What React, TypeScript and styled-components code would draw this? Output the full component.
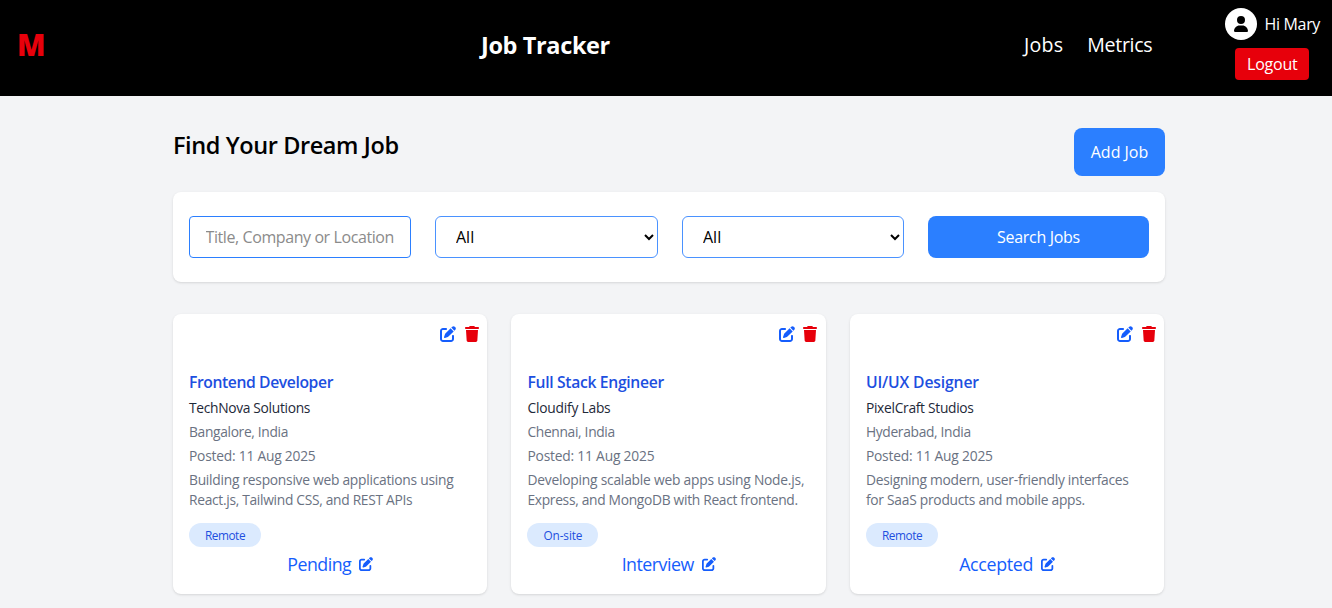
import React from 'react';
import styled, { createGlobalStyle } from 'styled-components';
import { FaPenToSquare, FaTrash, FaUser } from 'react-icons/fa6';

const GlobalStyle = createGlobalStyle`
  *, *::before, *::after { box-sizing: border-box; margin: 0; padding: 0; }
  body {
    background: #f3f4f6;
    color: #000;
    font: 400 16px/24px "Open Sans", "Noto Sans", sans-serif;
    overflow: hidden;
  }
  svg { display: block; }
  button, input, select { font: inherit; }
`;

const Label = styled.span<{ $ls?: number }>`
  letter-spacing: ${(p) => p.$ls ?? 0}px;
  white-space: nowrap;
`;

const Page = styled.div`
  height: 608px;
  overflow: hidden;
`;

const Header = styled.header`
  height: 96px;
  padding: 0 12px 7px 18px;
  background: #000;
  color: #fff;
  display: flex;
  align-items: center;
`;

const Logo = styled.div`
  width: 463px;
  margin-left: -1px;
  color: #e7000b;
  font: 800 29.5px/36px "Open Sans", sans-serif;
`;

const Brand = styled.h1`
  width: 544px;
  padding-left: 1px;
  font-size: 23.5px;
  line-height: 32px;
  font-weight: 700;
`;

const Nav = styled.nav`
  display: flex;
  gap: 24px;
  flex: 1;
  font-size: 19.6px;
  line-height: 28px;
`;

const Account = styled.div`
  display: flex;
  flex-direction: column;
  align-items: center;
  align-self: flex-start;
  gap: 8px;
  padding-top: 8px;
`;

const Greeting = styled.div`
  display: flex;
  align-items: center;
  gap: 8px;
`;

const Avatar = styled.div`
  width: 32px;
  height: 32px;
  border-radius: 50%;
  background: #fff;
  color: #000;
  display: grid;
  place-items: center;
`;

const Logout = styled.button`
  width: 74px;
  height: 32px;
  border: 0;
  border-radius: 4px;
  background: #e7000b;
  color: #fff;
`;

const Main = styled.main`
  width: 992px;
  margin-left: 173px;
  padding-top: 32px;
`;

const TitleRow = styled.div`
  display: flex;
  justify-content: space-between;
  align-items: flex-start;
  height: 64px;
`;

const Heading = styled.h2`
  font-size: 23.5px;
  line-height: 35px;
  font-weight: 600;
`;

const PrimaryButton = styled.button<{ $w?: number; $h: number }>`
  width: ${(p) => (p.$w ? `${p.$w}px` : '100%')};
  height: ${(p) => p.$h}px;
  border: 0;
  border-radius: 8px;
  background: #2b7fff;
  color: #fff;
`;

const SearchPanel = styled.form`
  height: 90px;
  padding: 24px 16px;
  border-radius: 8px;
  background: #fff;
  box-shadow: 0 1px 3px rgba(0, 0, 0, 0.1), 0 1px 2px -1px rgba(0, 0, 0, 0.1);
  display: grid;
  grid-template-columns: 222px 223px 222px 221px;
  justify-content: space-between;
`;

const SearchInput = styled.input`
  width: 100%;
  height: 42px;
  padding: 0 8px 0 15.5px;
  border: 1px solid #2b7fff;
  border-radius: 4px;
  background: #fff;
  letter-spacing: -0.41px;
  &::placeholder { color: #8b8b8b; opacity: 1; }
`;

const Select = styled.select`
  width: 100%;
  height: 42px;
  padding: 0 16px;
  border: 1px solid #4a92ff;
  border-radius: 6px;
  background: #fff;
  color: #000;
`;

const Cards = styled.section`
  width: 991.4px;
  margin-top: 32px;
  display: grid;
  grid-template-columns: repeat(3, minmax(0, 1fr));
  gap: 24px;
`;

const Card = styled.article`
  height: 280px;
  padding: 12px 16px 0;
  border-radius: 8px;
  background: #fff;
  box-shadow: 0 1px 3px rgba(0, 0, 0, 0.1), 0 1px 2px -1px rgba(0, 0, 0, 0.1);
`;

const Actions = styled.div`
  display: flex;
  justify-content: flex-end;
  gap: 7.4px;
  height: 44px;
  margin-right: -8.4px;
  color: #155dfc;
`;

const DeleteIcon = styled(FaTrash)`
  color: #e7000b;
`;

const JobTitle = styled.h3`
  color: #1d4fe0;
  font-size: 15.7px;
  line-height: 24px;
  font-weight: 600;
`;

const Detail = styled.p<{ $dark?: boolean }>`
  margin-top: 4px;
  color: ${(p) => (p.$dark ? '#1e2939' : '#6a7282')};
  font-size: 13.8px;
  line-height: 20px;
`;

const Tag = styled.div`
  display: flex;
  align-items: center;
  width: fit-content;
  height: 24px;
  margin-top: 13px;
  padding: 0 16px;
  border-radius: 12px;
  background: #dbeafe;
  color: #1d4fe0;
  font-size: 11.8px;
`;

const Status = styled.div`
  display: flex;
  justify-content: center;
  align-items: center;
  gap: 8px;
  margin-top: 3px;
  color: #155dfc;
  font-size: 17.8px;
  line-height: 28px;
`;

type Line = [text: string, spacing: number];

interface Job {
  title: Line;
  company: Line;
  place: Line;
  posted: Line;
  about: Line[];
  mode: Line;
  status: Line;
}

const jobs: Job[] = [
  {
    title: ['Frontend Developer', -0.4],
    company: ['TechNova Solutions', -0.32],
    place: ['Bangalore, India', -0.34],
    posted: ['Posted: 11 Aug 2025', -0.22],
    about: [['Building responsive web applications using', -0.26], ['React.js, Tailwind CSS, and REST APIs', -0.31]],
    mode: ['Remote', -0.45],
    status: ['Pending', -0.5],
  },
  {
    title: ['Full Stack Engineer', -0.32],
    company: ['Cloudify Labs', -0.22],
    place: ['Chennai, India', -0.33],
    posted: ['Posted: 11 Aug 2025', -0.2],
    about: [['Developing scalable web apps using Node.js,', -0.22], ['Express, and MongoDB with React frontend.', -0.31]],
    mode: ['On-site', -0.1],
    status: ['Interview', -0.5],
  },
  {
    title: ['UI/UX Designer', -0.15],
    company: ['PixelCraft Studios', -0.3],
    place: ['Hyderabad, India', -0.33],
    posted: ['Posted: 11 Aug 2025', -0.2],
    about: [['Designing modern, user-friendly interfaces', -0.27], ['for SaaS products and mobile apps.', -0.26]],
    mode: ['Remote', -0.4],
    status: ['Accepted', -0.3],
  },
];

const Spaced = ({ line }: { line: Line }) => <Label $ls={line[1]}>{line[0]}</Label>;

const JobCard = ({ job }: { job: Job }) => (
  <Card>
    <Actions>
      <FaPenToSquare size={16} />
      <DeleteIcon size={16} />
    </Actions>
    <JobTitle><Spaced line={job.title} /></JobTitle>
    <Detail $dark><Spaced line={job.company} /></Detail>
    <Detail><Spaced line={job.place} /></Detail>
    <Detail><Spaced line={job.posted} /></Detail>
    <Detail>
      <Spaced line={job.about[0]} />
      <br />
      <Spaced line={job.about[1]} />
    </Detail>
    <Tag><Spaced line={job.mode} /></Tag>
    <Status>
      <Spaced line={job.status} />
      <FaPenToSquare size={14} />
    </Status>
  </Card>
);

export default function App() {
  return (
    <Page>
      <GlobalStyle />
      <Header>
        <Logo>M</Logo>
        <Brand><Label $ls={-0.37}>Job Tracker</Label></Brand>
        <Nav>
          <Label $ls={0.2}>Jobs</Label>
          <Label $ls={-0.3}>Metrics</Label>
        </Nav>
        <Account>
          <Greeting>
            <Avatar><FaUser size={16} /></Avatar>
            <Label $ls={-0.35}>Hi Mary</Label>
          </Greeting>
          <Logout><Label $ls={-0.2}>Logout</Label></Logout>
        </Account>
      </Header>
      <Main>
        <TitleRow>
          <Heading><Label $ls={-0.4}>Find Your Dream Job</Label></Heading>
          <PrimaryButton $w={91} $h={48}><Label>Add Job</Label></PrimaryButton>
        </TitleRow>
        <SearchPanel>
          <SearchInput placeholder="Title, Company or Location" />
          <Select><option>All</option></Select>
          <Select><option>All</option></Select>
          <PrimaryButton type="button" $h={42}><Label $ls={-0.3}>Search Jobs</Label></PrimaryButton>
        </SearchPanel>
        <Cards>
          {jobs.map((job) => <JobCard key={job.title[0]} job={job} />)}
        </Cards>
      </Main>
    </Page>
  );
}
